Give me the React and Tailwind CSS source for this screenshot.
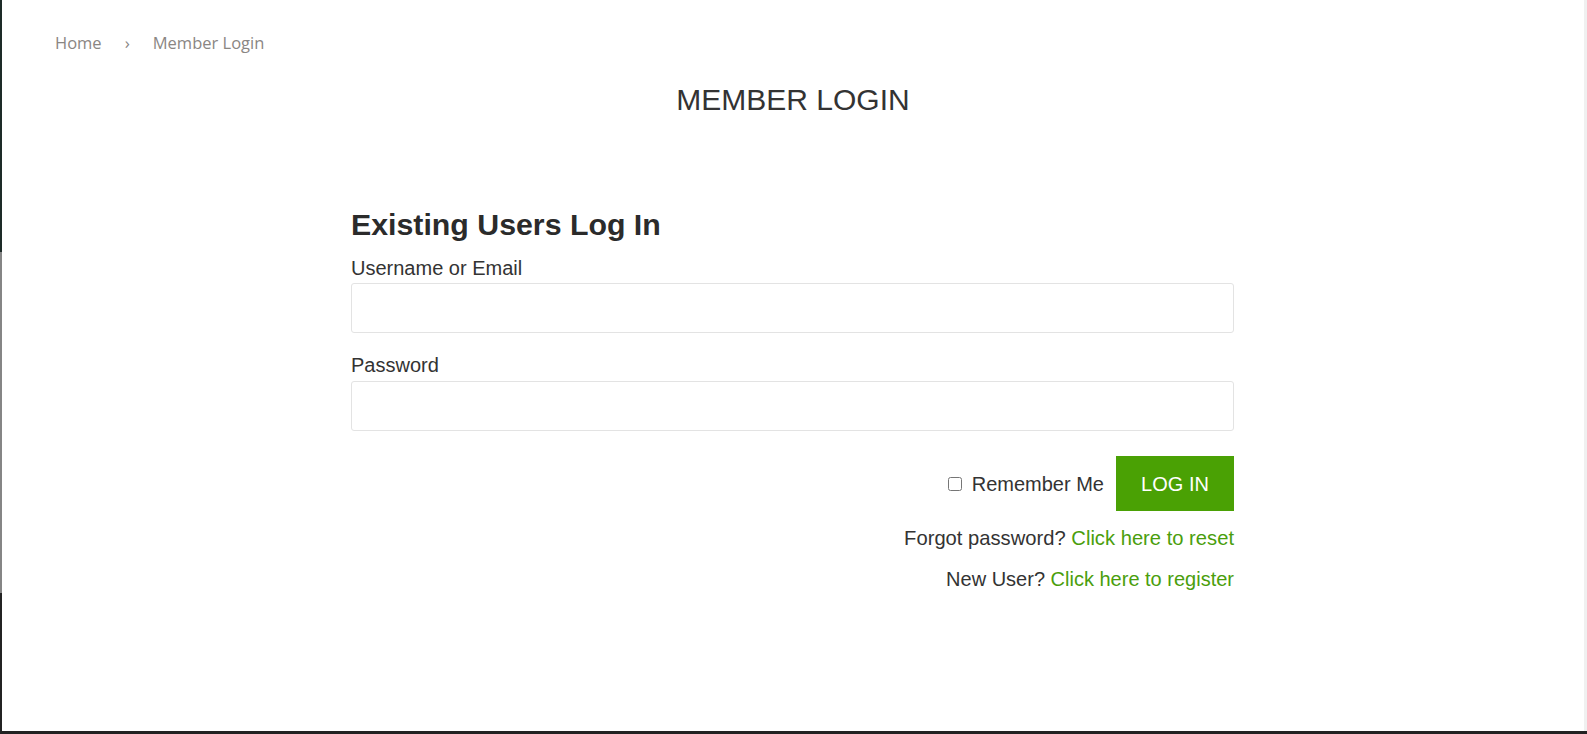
import React from "react";

const arial = { fontFamily: '"Liberation Sans", Arial, sans-serif' };

const Field = ({ label, id, type = "text", first }) => (
    <div className={first ? "mt-[14px]" : "mt-[20px]"}>
        <label htmlFor={id} className="block text-[20px] leading-[24px] text-[#333]">
            {label}
        </label>
        <input
            id={id}
            type={type}
            className={`${first ? "mt-[3px]" : "mt-[4px]"} block w-full h-[50px] border border-[#e3e3e3] rounded-[3px] bg-white px-3 outline-none`}
        />
    </div>
);

const App = () => {
    return (
        <div className="w-[1587px] h-[734px] flex flex-col bg-white overflow-hidden">
            <div className="flex flex-1">
                {/* left window edge */}
                <div className="w-[2px] flex flex-col">
                    <div className="h-[252px] bg-[#1d2b28]" />
                    <div className="h-[341px] bg-[#858585]" />
                    <div className="flex-1 bg-[#232323]" />
                </div>

                <main className="flex-1" style={arial}>
                    {/* breadcrumb */}
                    <nav
                        className="pt-[33px] pl-[53px] flex items-center text-[16.5px] leading-[20px] text-[#8a8683]"
                        style={{ fontFamily: '"Open Sans", "Noto Sans", sans-serif' }}
                    >
                        <a href="#">Home</a>
                        <span className="ml-[23px] mr-[23px] text-[17px]">›</span>
                        <span>Member Login</span>
                    </nav>

                    <h1 className="mt-[30px] text-center text-[30px] leading-[34px] text-[#333]">MEMBER LOGIN</h1>

                    {/* login form */}
                    <form className="mt-[91px] ml-[349px] w-[883px]" onSubmit={(e) => e.preventDefault()}>
                        <h2 className="text-[30.3px] leading-[34px] font-bold text-[#2b2b2b]">Existing Users Log In</h2>

                        <Field label="Username or Email" id="user" first />
                        <Field label="Password" id="pass" type="password" />

                        <div className="mt-[25px] flex items-center justify-end">
                            <label className="flex items-center text-[20px] leading-[24px] text-[#333]">
                                <input type="checkbox" className="w-[14px] h-[14px] mr-[10px]" />
                                Remember Me
                            </label>
                            <button
                                type="submit"
                                className="ml-[12px] w-[118px] h-[55px] bg-[#4aa104] text-white text-[20px]"
                            >
                                LOG IN
                            </button>
                        </div>

                        <p className="mt-[15px] text-right text-[20.2px] leading-[24px] text-[#333]">
                            Forgot password? <a href="#" className="text-[#4a9e0c]">Click here to reset</a>
                        </p>
                        <p className="mt-[17px] text-right text-[20px] leading-[24px] text-[#333]">
                            New User? <a href="#" className="text-[#4a9e0c]">Click here to register</a>
                        </p>
                    </form>
                </main>

                {/* scrollbar strip */}
                <div className="w-[3px] bg-[#f0f0f0]" />
            </div>
            <div className="h-[3px] bg-[#222]" />
        </div>
    );
};

export default App;
